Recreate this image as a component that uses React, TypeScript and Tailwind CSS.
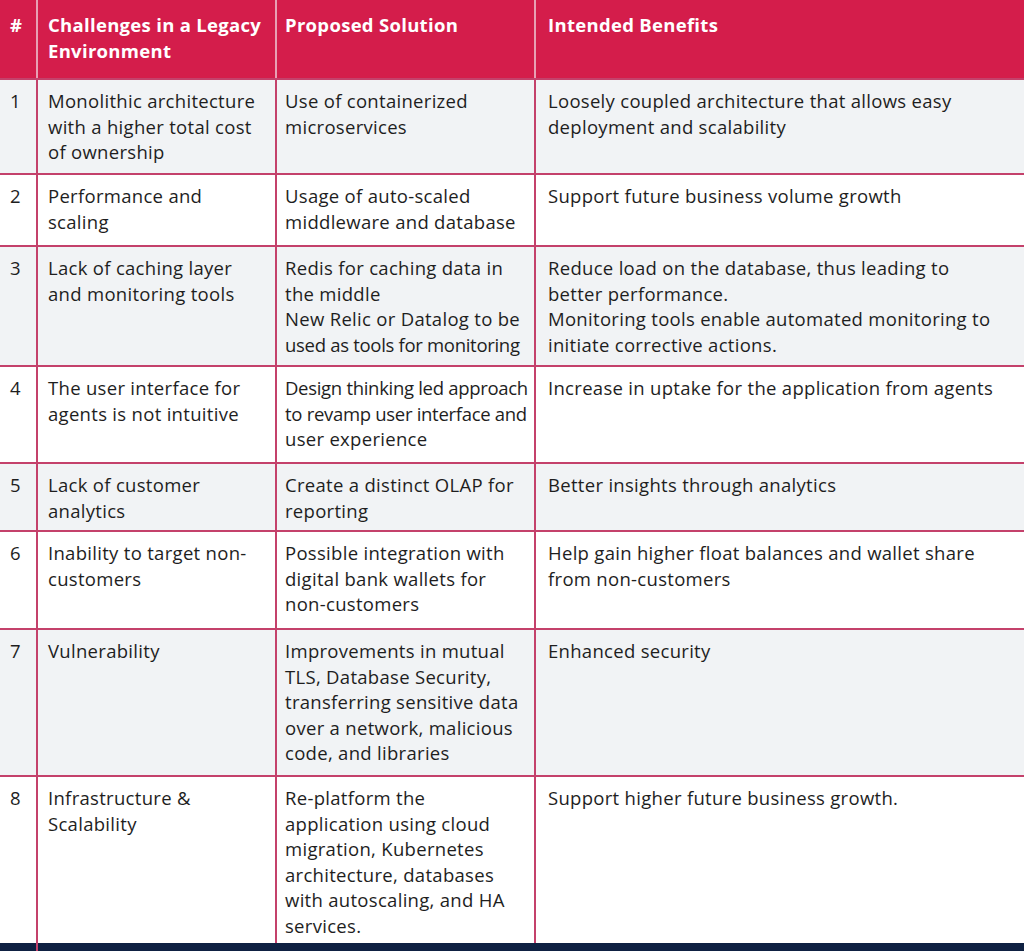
const rows = [
  {
    n: "1",
    h: "h-[95px]",
    bg: "bg-[#f1f3f5]",
    a: ["Monolithic architecture", "with a higher total cost", "of ownership"],
    b: ["Use of containerized", "microservices"],
    c: ["Loosely coupled architecture that allows easy", "deployment and scalability"],
  },
  {
    n: "2",
    h: "h-[72px]",
    bg: "bg-white",
    a: ["Performance and", "scaling"],
    b: ["Usage of auto-scaled", "middleware and database"],
    c: ["Support future business volume growth"],
  },
  {
    n: "3",
    h: "h-[120px]",
    bg: "bg-[#f1f3f5]",
    a: ["Lack of caching layer", "and monitoring tools"],
    b: ["Redis for caching data in", "the middle", "New Relic or Datalog to be", "~used as tools for monitoring"],
    c: [
      "Reduce load on the database, thus leading to",
      "better performance.",
      "Monitoring tools enable automated monitoring to",
      "initiate corrective actions.",
    ],
  },
  {
    n: "4",
    h: "h-[97px]",
    bg: "bg-white",
    a: ["The user interface for", "agents is not intuitive"],
    b: ["~Design thinking led approach", "~to revamp user interface and", "user experience"],
    c: ["Increase in uptake for the application from agents"],
  },
  {
    n: "5",
    h: "h-[68px]",
    bg: "bg-[#f1f3f5]",
    a: ["Lack of customer", "analytics"],
    b: ["Create a distinct OLAP for", "reporting"],
    c: ["Better insights through analytics"],
  },
  {
    n: "6",
    h: "h-[98px]",
    bg: "bg-white",
    a: ["Inability to target non-", "customers"],
    b: ["Possible integration with", "digital bank wallets for", "non-customers"],
    c: ["Help gain higher float balances and wallet share", "from non-customers"],
  },
  {
    n: "7",
    h: "h-[147px]",
    bg: "bg-[#f1f3f5]",
    a: ["Vulnerability"],
    b: [
      "Improvements in mutual",
      "TLS, Database Security,",
      "transferring sensitive data",
      "over a network, malicious",
      "code, and libraries",
    ],
    c: ["Enhanced security"],
  },
  {
    n: "8",
    h: "h-[168px]",
    bg: "bg-white",
    a: ["Infrastructure &", "Scalability"],
    b: [
      "Re-platform the",
      "application using cloud",
      "migration, Kubernetes",
      "architecture, databases",
      "with autoscaling, and HA",
      "services.",
    ],
    c: ["Support higher future business growth."],
  },
];

// a leading "~" marks a line that is set tighter in the source
function Lines({ lines }: { lines: string[] }) {
  return (
    <>
      {lines.map((l, i) =>
        l.startsWith("~") ? (
          <div key={i} className="whitespace-nowrap tracking-[-0.3px]">
            {l.slice(1)}
          </div>
        ) : (
          <div key={i} className="whitespace-nowrap">
            {l}
          </div>
        )
      )}
    </>
  );
}

export default function App() {
  return (
    <div
      className="w-[1024px] h-[951px] overflow-hidden bg-white text-[#1e1e1e] text-[18.5px] leading-[25.5px] tracking-[0.3px]"
      style={{ fontFamily: "'Open Sans', 'Liberation Sans', sans-serif" }}
    >
      <div className="grid grid-cols-[36px_239px_259px_1fr] h-[78px] bg-[#d41d4b] text-white font-bold">
        <div className="pl-[10px] pt-[12px]">#</div>
        <div className="border-l-2 border-[#e8a0b4] pl-[10px] pt-[12px]">
          <Lines lines={["Challenges in a Legacy", "Environment"]} />
        </div>
        <div className="border-l-2 border-[#e8a0b4] pl-[8px] pt-[12px]">Proposed Solution</div>
        <div className="border-l-2 border-[#e8a0b4] pl-[12px] pt-[12px]">Intended Benefits</div>
      </div>
      {rows.map((r) => (
        <div
          key={r.n}
          className={`grid grid-cols-[36px_239px_259px_1fr] border-t-2 border-[#c4416b] ${r.h} ${r.bg}`}
        >
          <div className="pl-[10px] pt-[8px]">{r.n}</div>
          <div className="border-l-2 border-[#c4416b] pl-[10px] pt-[8px]">
            <Lines lines={r.a} />
          </div>
          <div className="border-l-2 border-[#c4416b] pl-[8px] pt-[8px]">
            <Lines lines={r.b} />
          </div>
          <div className="border-l-2 border-[#c4416b] pl-[12px] pt-[8px]">
            <Lines lines={r.c} />
          </div>
        </div>
      ))}
      <div className="h-[8px] bg-[#0f2142] grid grid-cols-[36px_1fr]">
        <div></div>
        <div className="border-l-2 border-[#c4416b]"></div>
      </div>
    </div>
  );
}
